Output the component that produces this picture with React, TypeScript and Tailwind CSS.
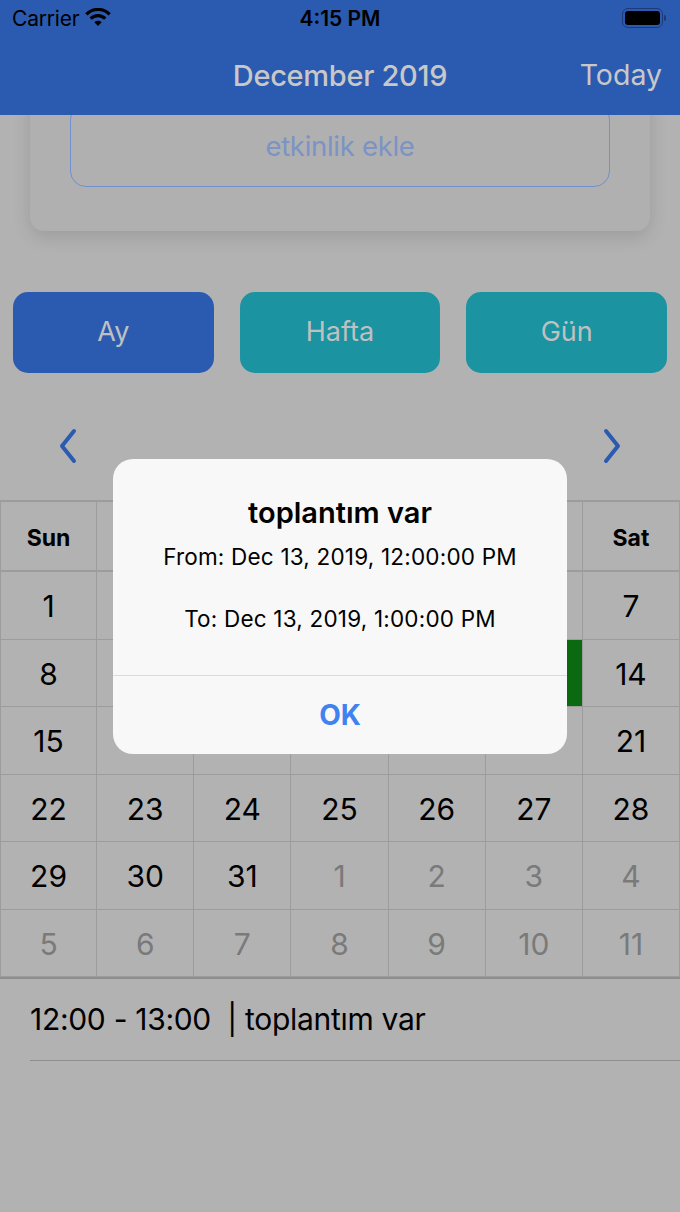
import React from "react";

const weekDays = ["Sun", "Mon", "Tue", "Wed", "Thu", "Fri", "Sat"];

// december 2019 grid, false = day from next month
const weeks: { d: number; cur: boolean }[][] = [];
(() => {
  let day = 1;
  let next = 1;
  for (let w = 0; w < 6; w++) {
    const row: { d: number; cur: boolean }[] = [];
    for (let i = 0; i < 7; i++) {
      if (day <= 31) row.push({ d: day++, cur: true });
      else row.push({ d: next++, cur: false });
    }
    weeks.push(row);
  }
})();

const Chevron = ({ dir }: { dir: "left" | "right" }) => (
  <svg width="22" height="36" viewBox="0 0 22 36" fill="none">
    <path
      d={dir === "left" ? "M17 3 L5 18 L17 33" : "M5 3 L17 18 L5 33"}
      stroke="#2b5bb0"
      strokeWidth="4"
      strokeLinecap="round"
      strokeLinejoin="round"
    />
  </svg>
);

const StatusBar = () => (
  <div className="h-[36px] flex items-center justify-between px-[12px] text-black">
    <div className="flex items-center gap-[5px] w-[150px]">
      <span className="text-[21px] leading-none tracking-[-0.2px]">Carrier</span>
      <svg width="28" height="20" viewBox="0 0 26 18">
        <path d="M13 16.5 L9.6 13 A5 5 0 0 1 16.4 13 Z" fill="black" />
        <path d="M6.2 9.6 A9.6 9.6 0 0 1 19.8 9.6" stroke="black" strokeWidth="3" fill="none" />
        <path d="M2.2 5.6 A15.2 15.2 0 0 1 23.8 5.6" stroke="black" strokeWidth="3" fill="none" />
      </svg>
    </div>
    <span className="text-[21px] font-semibold leading-none">4:15 PM</span>
    <div className="w-[150px] flex justify-end items-center pr-[2px]">
      <div className="w-[41px] h-[20px] rounded-[6px] border-[1.5px] border-[#1c3a78] p-[2px]">
        <div className="w-full h-full rounded-[3px] bg-black" />
      </div>
      <div className="w-[2px] h-[6px] bg-[#1c3a78] rounded-r ml-[1px]" />
    </div>
  </div>
);

export default function App() {
  return (
    <div
      className="relative w-[680px] h-[1212px] overflow-hidden bg-[#b2b2b2]"
      style={{ fontFamily: "Inter, Roboto, 'Liberation Sans', sans-serif" }}
    >
      <header className="relative z-10 h-[115px] bg-[#2b5bb0]">
        <StatusBar />
        <div className="h-[79px] flex items-center justify-center relative">
          <span className="text-[29px] font-medium text-[#c8c8c8] tracking-[-0.3px]">December 2019</span>
          <span className="absolute right-[18px] text-[28.5px] text-[#c8c8c8]">Today</span>
        </div>
      </header>

      {/* scrolled content */}
      <div className="h-[1097px] overflow-hidden">
        <div className="mt-[-45px] mx-[30px] h-[161px] rounded-[14px] bg-[#b0b0b0] shadow-[0_6px_18px_rgba(0,0,0,0.12)] px-[40px] pt-[33px]">
          <div className="h-[84px] rounded-[16px] border-[1.5px] border-[#7090d0] flex items-center justify-center pt-[4px]">
            <span className="text-[27.5px] text-[#7b93c5] tracking-[-0.3px]">etkinlik ekle</span>
          </div>
        </div>

        <div className="flex gap-[26px] px-[13px] mt-[61px]">
          <button className="flex-1 h-[81px] rounded-[15px] bg-[#2b5bb0] text-[27px] text-[#c0c0c0]">Ay</button>
          <button className="flex-1 h-[81px] rounded-[15px] bg-[#1b93a0] text-[27px] text-[#c0c0c0]">Hafta</button>
          <button className="flex-1 h-[81px] rounded-[15px] bg-[#1b93a0] text-[27px] text-[#c0c0c0]">Gün</button>
        </div>

        <div className="flex justify-between px-[57px] mt-[55px] h-[36px]">
          <Chevron dir="left" />
          <Chevron dir="right" />
        </div>

        <div className="mt-[36px] border-t-2 border-[#9c9c9c]">
          <div className="grid grid-cols-7 h-[70px] border-b-2 border-[#9c9c9c]">
            {weekDays.map((w, i) => (
              <div
                key={w}
                className={`flex items-center justify-center pt-[4px] text-[23px] font-bold text-black border-r border-[#9c9c9c] ${i === 0 ? "border-l" : ""}`}
              >
                {w}
              </div>
            ))}
          </div>
          {weeks.map((row, r) => (
            <div key={r} className="grid grid-cols-7 h-[67.5px]">
              {row.map((c, i) => (
                <div
                  key={i}
                  className={`flex items-center justify-center pt-[3px] text-[30px] border-r border-b border-[#9c9c9c] ${i === 0 ? "border-l" : ""} ${c.cur ? "text-black" : "text-[#7a7a7a]"} ${c.cur && c.d === 13 ? "bg-[#0b6a10]" : ""}`}
                >
                  {c.d}
                </div>
              ))}
            </div>
          ))}
          <div className="h-[2px] bg-[#8e8e8e]" />
        </div>

        <div className="ml-[30px] h-[82px] flex items-center border-b border-[#8e8e8e]">
          <span className="text-[30px] text-black tracking-[-0.3px]">12:00 - 13:00 &nbsp;| toplantım var</span>
        </div>
      </div>

      {/* alert */}
      <div className="absolute inset-0 z-20 flex items-center justify-center">
        <div className="w-[454px] h-[295px] rounded-[20px] bg-[#f8f8f8] flex flex-col">
          <div className="h-[216px] flex flex-col items-center pt-[37px]">
            <span className="text-[29px] font-semibold text-black leading-[34px]">toplantım var</span>
            <span className="text-[22.5px] text-black mt-[14px] leading-[26px] tracking-[0.2px]">From: Dec 13, 2019, 12:00:00 PM</span>
            <span className="text-[22.5px] text-black mt-[36px] leading-[26px] tracking-[0.2px]">To: Dec 13, 2019, 1:00:00 PM</span>
          </div>
          <div className="flex-1 border-t border-[#dcdcdc] flex items-center justify-center">
            <span className="text-[28px] font-bold text-[#3f83f0]">OK</span>
          </div>
        </div>
      </div>
    </div>
  );
}
